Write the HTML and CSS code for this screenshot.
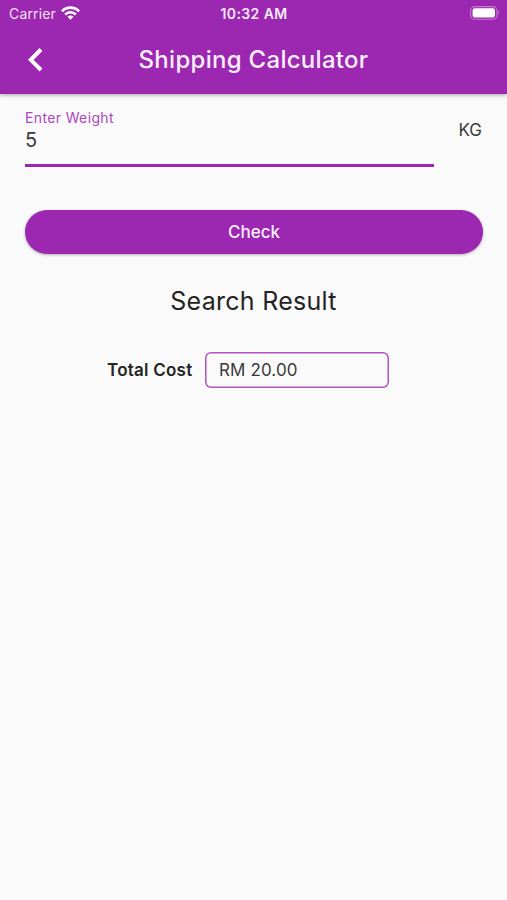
FILE: index.html
```html
<!DOCTYPE html>
<html lang="en">
<head>
<meta charset="utf-8">
<title>Shipping Calculator</title>
<link rel="stylesheet" href="styles.css">
</head>
<body>
<header class="app-header">
  <div class="status">
    <div class="carrier"><span class="carrier-name">Carrier</span>
      <svg class="wifi" width="19" height="14" viewBox="0 0 19 14" fill="none" stroke="#fff"><path d="M1 5.300C5.500.3 13.500.3 18 5.300" stroke-width="2.700"/><path d="M4.200 8.500C7 5.500 12 5.500 14.800 8.500" stroke-width="2.600"/><path d="M6.500 10.800C8.200 9.200 10.800 9.200 12.500 10.800L9.500 13.700Z" fill="#fff" stroke="none"/></svg>
    </div>
    <span class="time">10:32 AM</span>
    <svg class="battery" width="30" height="14" viewBox="0 0 30 14"><rect x=".6" y=".6" width="26.400" height="12.600" rx="4" fill="none" stroke="#c37bcf" stroke-width="1.100"/><rect x="2.600" y="2.300" width="22.400" height="9.200" rx="2.200" fill="#fff"/><path d="M28 4.500Q30 6.700 28 9Z" fill="#c37bcf"/></svg>
  </div>
  <div class="toolbar">
    <svg class="back" width="18" height="26" viewBox="0 0 18 26"><path d="M15 2.500L4.800 12.800L15 23" fill="none" stroke="#fff" stroke-width="4"/></svg>
    <h1 class="title">Shipping Calculator</h1>
  </div>
</header>
<main class="content">
  <div class="weight-row">
    <div class="field"><label class="label">Enter Weight</label><div class="value">5</div></div>
    <span class="unit">KG</span>
  </div>
  <button class="check"><span class="check-text">Check</span></button>
  <h2 class="result-title">Search Result</h2>
  <div class="result"><strong class="cost-label">Total Cost</strong><div class="cost"><span class="cost-text">RM 20.00</span></div></div>
</main>
</body>
</html>
```
FILE: styles.css
```css
* { box-sizing: border-box; }
body { margin: 0; min-height: 900px; background: #fafafa; color: #242424; font-family: Inter, sans-serif; }
.app-header { height: 94px; background: #9c27b0; color: #fff; box-shadow: 0 1px 4px rgba(0,0,0,.35); }
.status { height: 27px; display: grid; grid-template-columns: 1fr auto 1fr; align-items: center; padding: 0 7px 0 9px; }
.carrier { display: flex; align-items: center; gap: 5px; font-size: 14px; letter-spacing: .15px; color: #f3e0f5; }
.wifi { margin-top: -1px; }
.time { font-size: 14px; font-weight: 600; letter-spacing: .4px; color: #f8ebf9; margin-left: -1px; }
.battery { justify-self: end; margin-top: -1px; }
.toolbar { height: 66px; display: grid; grid-template-columns: 44px 1fr 44px; align-items: center; }
.back { margin-left: 26px; }
.title { margin: 0; text-align: center; font-size: 24px; line-height: 30px; font-weight: 500; letter-spacing: .29px; color: #fceffd; }
.content { padding: 15px 25px 0; }
.weight-row { display: flex; justify-content: space-between; }
.field { width: 409px; height: 58px; border-bottom: 3px solid #9c27b0; }
.label { display: block; color: #ab47bc; font-size: 14px; line-height: 17px; letter-spacing: .36px; }
.value { font-size: 20px; line-height: 29px; color: #3a3a3a; }
.unit { font-size: 17px; line-height: 20px; margin-top: 11px; color: #3a3a3a; }
.check { display: block; width: 458px; height: 44px; margin-top: 43px; border: 0; border-radius: 22px; background: #9c27b0; color: #fceffd; font: 500 17px/24px Inter, sans-serif; box-shadow: 0 1px 3px rgba(0,0,0,.3); }
.result-title { margin: 31px 0 0; text-align: center; font-size: 25px; line-height: 32px; font-weight: 400; letter-spacing: .28px; }
.result { display: flex; align-items: center; margin: 35px 0 0 82px; }
.cost-label { font-size: 17px; font-weight: 600; letter-spacing: .24px; width: 98px; white-space: nowrap; }
.cost { width: 184px; height: 36px; box-shadow: inset 0 0 0 1.500px #b252c2; border-radius: 6px; padding: 0 14px; font-size: 17px; line-height: 36px; letter-spacing: .12px; color: #3a3a3a; }
```
